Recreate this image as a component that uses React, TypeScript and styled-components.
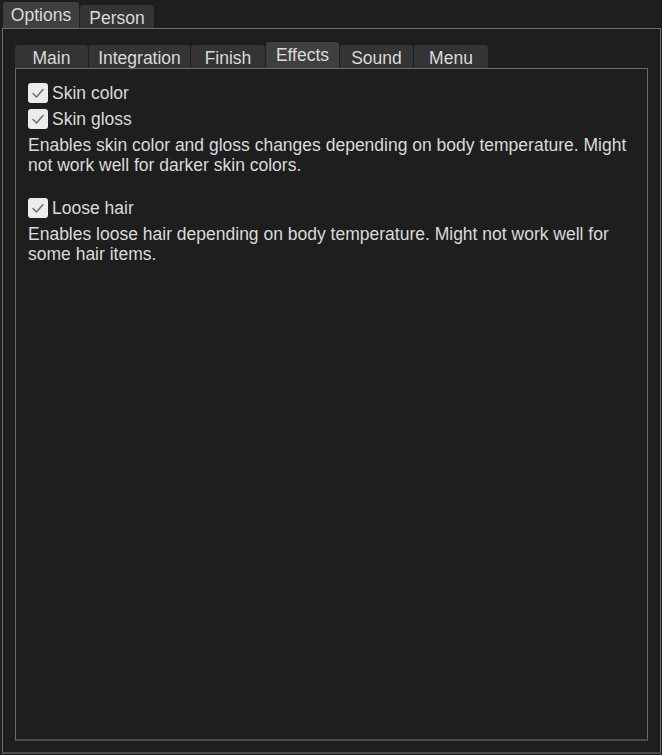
import React from "react";
import styled, { createGlobalStyle } from "styled-components";

const Global = createGlobalStyle`
  html, body {
    margin: 0;
    padding: 0;
    background: #1e1e1e;
  }
  body {
    font-family: "Liberation Sans", Arial, sans-serif;
    color: #d6d6d6;
  }
`;

const Page = styled.div`
  width: 662px;
  height: 755px;
  box-sizing: border-box;
  padding: 2px 1px 1px 2px;
  display: flex;
  flex-direction: column;
`;

const TabBar = styled.div<{ $indent: number }>`
  display: flex;
  align-items: flex-end;
  gap: 1px;
  padding-left: ${(p) => p.$indent}px;
  height: 26px;
  flex-shrink: 0;
`;

const Tab = styled.div<{ $active?: boolean; $width: number }>`
  box-sizing: border-box;
  width: ${(p) => p.$width}px;
  height: ${(p) => (p.$active ? 26 : 23)}px;
  background: ${(p) => (p.$active ? "#3f3f3f" : "#343434")};
  border-radius: 3px 3px 0 0;
  font-size: 17.5px;
  line-height: 26px;
  text-align: center;
  color: #dadada;
  white-space: nowrap;
`;

const OuterPanel = styled.div`
  flex: 1;
  box-sizing: border-box;
  border: 1px solid #6a6a6a;
  border-bottom: 2px solid #4b4b4b;
  padding: 13px 12px 11px 12px;
  display: flex;
  flex-direction: column;
`;

const InnerPanel = styled.div`
  flex: 1;
  box-sizing: border-box;
  border: 1px solid #6a6a6a;
  border-bottom: 2px solid #4b4b4b;
  padding: 11px 12px;
`;

const CheckRow = styled.label`
  display: flex;
  align-items: center;
  gap: 4px;
  height: 26px;
  font-size: 17.5px;
  color: #dadada;
`;

const Box = styled.span`
  width: 20px;
  height: 20px;
  border-radius: 3px;
  background: #ececec;
  display: flex;
  align-items: center;
  justify-content: center;
  flex-shrink: 0;
`;

const Desc = styled.p<{ $gapAfter?: number }>`
  margin: 0 0 ${(p) => p.$gapAfter ?? 0}px 0;
  font-size: 17.5px;
  line-height: 20px;
  color: #dadada;
  padding-top: 3px;
`;

const Check = () => (
  <svg width="14" height="12" viewBox="0 0 14 12">
    <path d="M2 6.5 L5.5 10 L12 2.5" fill="none" stroke="#6e6e6e" strokeWidth="1.5" strokeLinecap="round" strokeLinejoin="round" />
  </svg>
);

const CheckItem = ({ label }: { label: string }) => (
  <CheckRow>
    <Box>
      <Check />
    </Box>
    {label}
  </CheckRow>
);

export default function App() {
  return (
    <>
      <Global />
      <Page>
        <TabBar $indent={1}>
          <Tab $active $width={76}>Options</Tab>
          <Tab $width={74}>Person</Tab>
        </TabBar>
        <OuterPanel>
          <TabBar $indent={0}>
            <Tab $width={73}>Main</Tab>
            <Tab $width={101}>Integration</Tab>
            <Tab $width={74}>Finish</Tab>
            <Tab $active $width={73}>Effects</Tab>
            <Tab $width={73}>Sound</Tab>
            <Tab $width={74}>Menu</Tab>
          </TabBar>
          <InnerPanel>
            <CheckItem label="Skin color" />
            <CheckItem label="Skin gloss" />
            <Desc $gapAfter={20}>
              Enables skin color and gloss changes depending on body temperature. Might not work well for darker skin colors.
            </Desc>
            <CheckItem label="Loose hair" />
            <Desc>
              Enables loose hair depending on body temperature. Might not work well for some hair items.
            </Desc>
          </InnerPanel>
        </OuterPanel>
      </Page>
    </>
  );
}
